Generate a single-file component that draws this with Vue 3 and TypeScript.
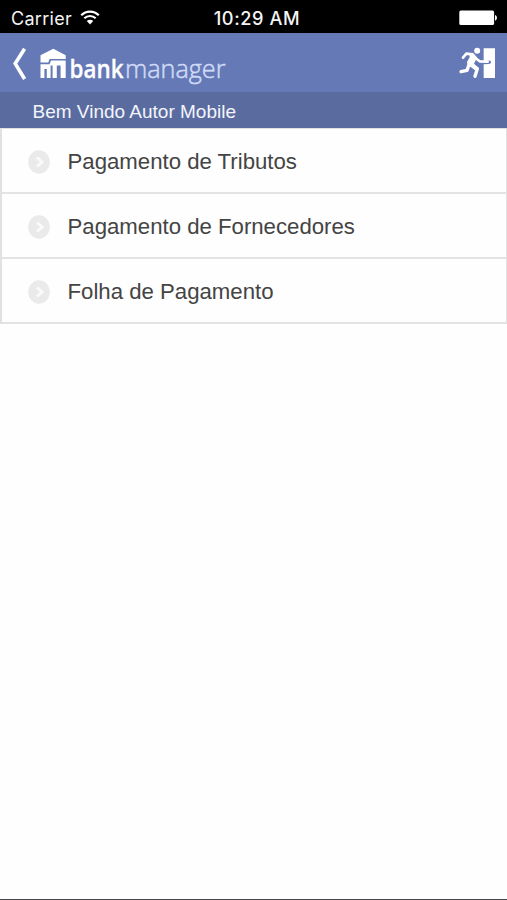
<script setup lang="ts">
interface MenuItem {
  id: string
  label: string
}

const userName: string = 'Autor Mobile'
const items: MenuItem[] = [
  { id: 'taxes', label: 'Pagamento de Tributos' },
  { id: 'suppliers', label: 'Pagamento de Fornecedores' },
  { id: 'payroll', label: 'Folha de Pagamento' },
]
</script>

<template>
  <div class="screen">
    <div class="status">
      <div class="carrier">
        <span>Carrier</span>
        <svg class="wifi" width="20" height="15" viewBox="0 0 20 15">
          <path d="M1.2 5.2C6.2.3 13.8.3 18.8 5.2" />
          <path d="M4.3 8.3C7.6 5.2 12.4 5.2 15.7 8.3" />
          <path class="dot" d="M6.8 11C8.7 9.3 11.3 9.3 13.2 11L10 14.4Z" />
        </svg>
      </div>
      <span class="time">10:29 AM</span>
      <svg class="battery" width="39" height="16" viewBox="0 0 39 16">
        <rect x="0.3" y="0.5" width="34.8" height="14.6" rx="1.6" />
        <path d="M36 5C38.6 5.6 38.6 10 36 10.7Z" />
      </svg>
    </div>

    <header class="nav">
      <button class="back" aria-label="Voltar">
        <svg width="14" height="34" viewBox="0 0 14 34">
          <path d="M12.6 1.8L3.2 16.6L12.6 32" />
        </svg>
      </button>
      <svg class="logo" width="188" height="40" viewBox="0 0 188 40">
        <path d="M.5 10.2L13.3 3.8L25.7 10.2V14H9.6L8.3 17.5H.5Z" />
        <path d="M11 15.4H25.7V33H20.6V20.4H16.8V33H12.6V20.4H10.6V33H6.8V24H4.4V33H.5V19.2H9.6Z" />
        <text class="bold" x="29.5" y="32.5" textLength="54" lengthAdjust="spacingAndGlyphs">bank</text>
        <text class="light" x="85" y="32.5" textLength="100.5" lengthAdjust="spacingAndGlyphs">manager</text>
      </svg>
      <button class="exit" aria-label="Sair">
        <svg width="37" height="33" viewBox="36 31 111 99">
          <circle cx="90.5" cy="42" r="9" />
          <path d="M110 35H144V124H110V83L125 82Q133 81 132 75Q130 70 122 72L110 75Z" />
          <path class="limb arm" d="M48 63L58 51L77 53L88 66L98 74L122 75" />
          <path d="M67 52L82 54L88 66L81 82L92 93L84 101L62 84L60 76L68 62Z" />
          <path class="limb" d="M68 78L60 101L42 105" />
          <path class="limb" d="M75 84L91 96L84 119" />
        </svg>
      </button>
    </header>

    <div class="welcome">Bem Vindo {{ userName }}</div>

    <ul class="menu">
      <li v-for="item in items" :key="item.id" class="item">
        <svg class="bullet" width="22" height="24" viewBox="0 0 22 24">
          <ellipse cx="11" cy="12" rx="10.8" ry="11.8" />
          <path d="M9 7.5L14 12L9 16.5" />
        </svg>
        <span>{{ item.label }}</span>
      </li>
    </ul>
  </div>
</template>

<style>
body {
  background: #fff;
}
</style>

<style scoped>
.screen {
  display: flex;
  flex-direction: column;
  box-sizing: border-box;
  height: 900px;
  overflow: hidden;
  background: #fefefe;
  border-bottom: 1px solid #454547;
  font-family: "Liberation Sans", Arial, sans-serif;
}
.status {
  display: grid;
  grid-template-columns: 1fr auto 1fr;
  align-items: center;
  height: 33px;
  box-sizing: border-box;
  padding: 3px 9px 0 11px;
  background: #000;
  color: #f4f4f4;
  font-family: Inter, sans-serif;
  font-size: 18px;
}
.carrier {
  display: flex;
  align-items: center;
  gap: 8px;
  letter-spacing: 0.3px;
}
.wifi {
  fill: none;
  stroke: #fff;
  stroke-width: 2.2;
  margin-top: -2px;
}
.wifi .dot {
  fill: #fff;
  stroke: none;
}
.time {
  padding-left: 5px;
  font-weight: 500;
  font-size: 18.2px;
  letter-spacing: 0.6px;
}
.battery {
  justify-self: end;
  fill: #fff;
}
.nav {
  display: flex;
  align-items: center;
  height: 59px;
  box-sizing: border-box;
  padding: 0 11px 0 12px;
  background: #6579b6;
}
button {
  display: flex;
  padding: 0;
  border: 0;
  background: none;
}
.back {
  margin-top: 2px;
}
.back svg {
  fill: none;
  stroke: #fff;
  stroke-width: 3.6;
}
.logo {
  margin: 5px 0 0 14px;
  fill: #fff;
}
.logo text {
  font-family: "Open Sans", sans-serif;
  font-size: 26px;
}
.logo .bold {
  font-weight: 600;
  stroke: #fff;
  stroke-width: 0.3;
}
.logo .light {
  font-weight: 300;
  fill: #d0dbf7;
  stroke: #d0dbf7;
  stroke-width: 0.5;
}
.exit {
  margin: 2px 0 0 auto;
}
.exit svg {
  fill: #fff;
}
.exit .limb {
  fill: none;
  stroke: #fff;
  stroke-width: 10;
  stroke-linecap: round;
  stroke-linejoin: round;
}
.exit .arm {
  stroke-width: 8;
}
.welcome {
  height: 36px;
  box-sizing: border-box;
  padding: 2px 0 0 32.5px;
  background: #5a6ba0;
  color: #f3f5fb;
  font-size: 19px;
  line-height: 36px;
}
.menu {
  margin: 0;
  padding: 0;
  list-style: none;
  border: solid #e1e1e1;
  border-width: 1px 1px 0 2px;
}
.item {
  display: flex;
  align-items: center;
  gap: 17.5px;
  box-sizing: border-box;
  height: 65px;
  padding: 2px 0 0 26px;
  border-bottom: 2px solid #e3e3e3;
  color: #444;
  font-size: 22.2px;
}
.bullet {
  fill: #ebeaeb;
}
.bullet path {
  fill: none;
  stroke: #fafafa;
  stroke-width: 3;
}
</style>
